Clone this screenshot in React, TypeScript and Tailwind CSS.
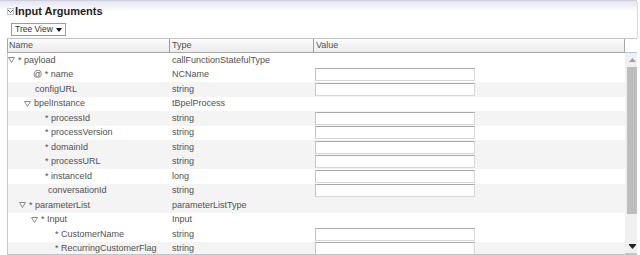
import { memo } from "react";

type Row = {
  label: string;
  pl: string;
  type: string;
  tri?: boolean;
  input?: boolean;
  gray?: boolean;
};

const rows: Row[] = [
  { label: "* payload", pl: "pl-0", type: "callFunctionStatefulType", tri: true },
  { label: "@ * name", pl: "pl-[25px]", type: "NCName", input: true },
  { label: "configURL", pl: "pl-[27px]", type: "string", input: true, gray: true },
  { label: "bpelInstance", pl: "pl-[16px]", type: "tBpelProcess", tri: true },
  { label: "* processId", pl: "pl-[37px]", type: "string", input: true, gray: true },
  { label: "* processVersion", pl: "pl-[37px]", type: "string", input: true },
  { label: "* domainId", pl: "pl-[37px]", type: "string", input: true, gray: true },
  { label: "* processURL", pl: "pl-[37px]", type: "string", input: true, gray: true },
  { label: "* instanceId", pl: "pl-[37px]", type: "long", input: true },
  { label: "conversationId", pl: "pl-[40px]", type: "string", input: true, gray: true },
  { label: "* parameterList", pl: "pl-[11px]", type: "parameterListType", tri: true, gray: true },
  { label: "* Input", pl: "pl-[23px]", type: "Input", tri: true },
  { label: "* CustomerName", pl: "pl-[47px]", type: "string", input: true },
  { label: "* RecurringCustomerFlag", pl: "pl-[47px]", type: "string", input: true, gray: true },
  { label: "* ServiceLevel", pl: "pl-[47px]", type: "string", input: true },
];

const Expand = () => (
  <svg width="7" height="6" viewBox="0 0 7 6" className="shrink-0 mr-[3px]">
    <path d="M0.5 0.5 H6.5 L3.5 5.5 Z" fill="none" stroke="#8a8a8a" strokeWidth="1" />
  </svg>
);

const TreeRow = ({ row }: { row: Row }) => (
  <div className={`flex h-[14.5px] items-center ${row.gray ? "bg-[#f4f4f4]" : "bg-white"}`}>
    <div className={`w-[161px] flex items-center whitespace-nowrap ${row.pl}`}>
      {row.tri && <Expand />}
      <span>{row.label}</span>
    </div>
    <div className="w-[144px] pl-[3px] whitespace-nowrap">{row.type}</div>
    <div className="flex-1 pl-[2px] flex items-center">
      {row.input && (
        <div className="w-[160px] h-[13px] bg-white border border-[#d6d6d6] border-t-[#a9a9a9] border-l-[#c4c4c4]" />
      )}
    </div>
  </div>
);

const ScrollBar = () => (
  <div className="w-[12px] bg-[#f0f0f0] border-b border-[#b6cbe4] flex flex-col items-end">
    <div className="w-full h-[14px] flex items-center justify-center pl-[2px]">
      <svg width="7" height="4" viewBox="0 0 7 4">
        <path d="M3.5 0 L7 4 H0 Z" fill="#a0a0a0" />
      </svg>
    </div>
    <div className="w-[10px] h-[147px] bg-[#bdbdbd]" />
    <div className="flex-1" />
    <div className="w-full h-[14px] flex flex-col items-center justify-center pl-[2px]">
      <div className="w-[7px] h-px bg-[#222]" />
      <svg width="7" height="4" viewBox="0 0 7 4">
        <path d="M0 0 H7 L3.5 4 Z" fill="#222" />
      </svg>
    </div>
  </div>
);

const InputArgumentsComponent = () => {
  return (
    <div className="w-[640px] h-[255px] bg-white overflow-hidden font-['Liberation_Sans',Arial,sans-serif] text-[9px] text-[#505050]">
      <div className="w-[638px] border-r border-[#d8d8e0] rounded-tr-[3px]">
        <div className="h-[21px] border-t border-[#cfcfe0] bg-gradient-to-b from-[#e4e4f2] via-white to-white flex items-center pl-[7px]">
          <div className="w-[7px] h-[7px] border border-[#c4c4c4] flex items-center justify-center mr-[1px]">
            <svg width="5" height="3" viewBox="0 0 5 3">
              <path d="M0 0 L2.5 2.5 L5 0" fill="none" stroke="#555" strokeWidth="1" />
            </svg>
          </div>
          <span className="text-[11px] font-bold text-[#1e1e1e] leading-none">Input Arguments</span>
        </div>
        <div className="h-[17px] flex items-center pl-[11px]">
          <div className="h-[13px] w-[55px] border border-[#9c9c9c] flex items-center justify-between pl-[3px] pr-[3px] text-[8.5px] text-[#333] whitespace-nowrap">
            <span>Tree View</span>
            <svg width="6" height="4" viewBox="0 0 6 4">
              <path d="M0 0 H6 L3 4 Z" fill="#111" />
            </svg>
          </div>
        </div>
      </div>

      <div className="ml-[7px] w-[630px] flex flex-col">
        <div className="flex h-[15px] border-t border-[#c4c4c4]">
          <div className="flex flex-1 border-l border-b border-r border-[#a8a8a8] bg-gradient-to-b from-[#fcfcfc] to-[#ececec]">
            <div className="w-[161px] pl-[1px] leading-[13px]">Name</div>
            <div className="w-[144px] pl-[2px] border-l border-[#9a9a9a] leading-[13px]">Type</div>
            <div className="flex-1 pl-[2px] border-l border-[#9a9a9a] leading-[13px]">Value</div>
          </div>
          <div className="w-[12px] border-b border-[#aac4e4] bg-white" />
        </div>
        <div className="flex h-[202px] border-b border-[#c4c4c4]">
          <div className="flex-1 border-l border-[#c8c8c8] overflow-hidden">
            {rows.map((r) => (
              <TreeRow key={r.label} row={r} />
            ))}
          </div>
          <ScrollBar />
        </div>
      </div>
    </div>
  );
};

export default memo(InputArgumentsComponent);
